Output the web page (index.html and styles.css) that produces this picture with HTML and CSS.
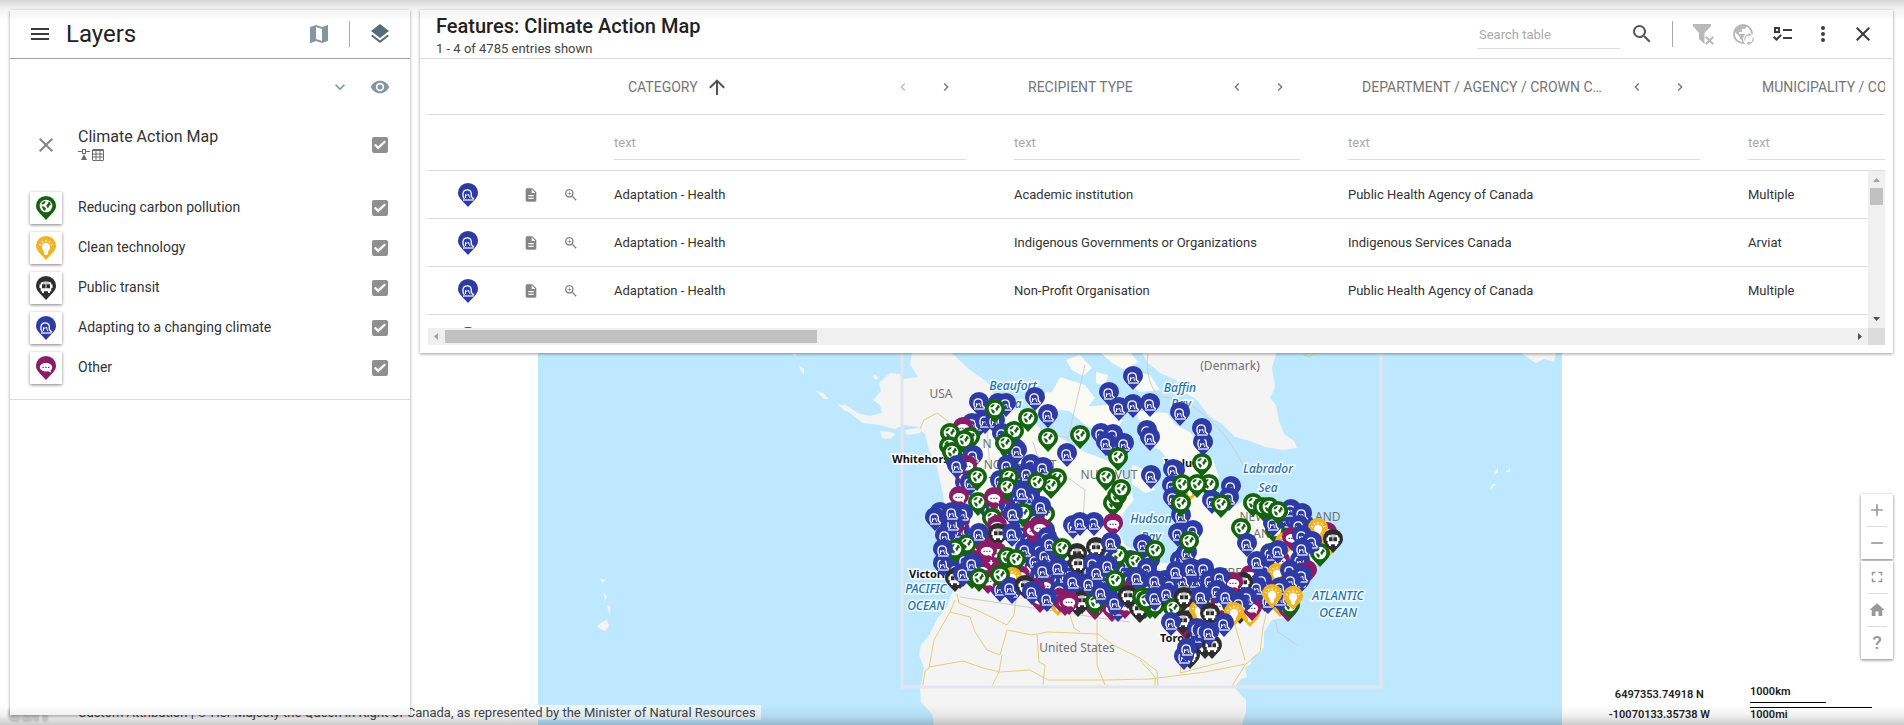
FILE: index.html
```html
<!DOCTYPE html>
<html lang="en">
<head>
<meta charset="utf-8">
<title>Climate Action Map</title>
<link rel="stylesheet" href="styles.css">
</head>
<body>
<svg class="sprite" aria-hidden="true">
  <defs>
    <path id="drop" d="M10 24L3.200 16.800C1.200 14.500 0 12.500 0 9.800A10 9.800 0 0 1 20 9.800C20 12.500 18.800 14.500 16.800 16.800Z"/>
    <symbol id="pin-g" viewBox="0 0 20 24"><use href="#drop" fill="#14640f"/><circle cx="10" cy="10" r="6.300" fill="#fff"/><path fill="#14640f" d="M5.500 7.600L7.300 5.400L9.600 5L9.200 6.800L7.400 8.300L5.700 8.600ZM10.300 9.200L12 7.800L11.800 6.600L13.600 6L15 8.500L13.200 9.600L12.600 11.400L11 11.800ZM5.600 10.300L8 10.600L9.800 12.300L9.200 14.800L7.600 14.200Z"/></symbol>
    <symbol id="pin-y" viewBox="0 0 20 24"><use href="#drop" fill="#f2b322"/><path fill="#fff" d="M10 6.800A4.200 4.200 0 0 1 14.200 11C14.200 13.500 12 14 12 16.500V18L10 19.300L8 18V16.500C8 14 5.800 13.500 5.800 11A4.200 4.200 0 0 1 10 6.800Z"/><path stroke="#fff" stroke-width="1.200" d="M10 3.800V5.800M5.800 5L7 6.600M14.200 5L13 6.600M3.200 8.300L5 9M16.800 8.300L15 9"/></symbol>
    <symbol id="pin-k" viewBox="0 0 20 24"><use href="#drop" fill="#2e2e2e"/><path fill="#fff" d="M5.500 6.300Q10 4.700 14.500 6.300L15.300 7.500V8.500H16.500V12H15.300V15.300H14V17H12V15.300H8V17H6V15.300H4.700V12H3.500V8.500H4.700V7.500Z"/><path fill="#2e2e2e" d="M6 8.300H9.600V12.300H6ZM10.400 8.300H14V12.300H10.400ZM7 6.700H13V7.300H7Z"/></symbol>
    <symbol id="pin-b" viewBox="0 0 20 24"><use href="#drop" fill="#2f3ba4"/><path fill="none" stroke="#fff" stroke-width="1.300" d="M6.400 16L5.600 14.500L5 13.500V10.500A4.200 4.200 0 0 1 13.300 10.500V13.500L15.800 16.200"/><path fill="none" stroke="#fff" stroke-width="1" d="M7.500 15V11.500L9 12.500L10.500 11L11.200 13.500L12 15.200"/><path stroke="#fff" stroke-width="1.200" d="M5 17H15.500"/></symbol>
    <symbol id="pin-m" viewBox="0 0 20 24"><use href="#drop" fill="#8a1c68"/><path fill="#fff" d="M10 6.900C13.500 6.900 16.200 8.800 16.200 11.200C16.200 12.700 15.500 13.700 14.600 14.400L15 16.700L12.200 15.300C8 16 3.800 14.200 3.800 11.200C3.800 8.800 6.500 6.900 10 6.900Z"/><path fill="#8a1c68" d="M6.500 10.700h1.300v1.300h-1.300zM9.300 10.700h1.300v1.300h-1.300zM12.100 10.700h1.300v1.300h-1.300z"/></symbol>
    <symbol id="i-menu" viewBox="0 0 24 24"><path d="M3 6H21V8H3ZM3 11H21V13H3ZM3 16H21V18H3Z"/></symbol>
    <symbol id="i-map" viewBox="0 0 24 24"><path d="M20.500 3L20.340 3.030L15 5.100L9 3L3.360 4.900C3.150 4.970 3 5.150 3 5.380V20.500A.5 .5 0 0 0 3.500 21L3.660 20.970L9 18.900L15 21L20.640 19.100C20.850 19.030 21 18.850 21 18.620V3.500A.5 .5 0 0 0 20.500 3M15 19L9 16.890V5L15 7.110V19Z"/></symbol>
    <symbol id="i-layers" viewBox="0 0 24 24"><path d="M12 16L19.360 10.270L21 9L12 2L3 9L4.630 10.270M12 18.540L4.620 12.810L3 14.070L12 21.070L21 14.070L19.370 12.800Z"/></symbol>
    <symbol id="i-down" viewBox="0 0 24 24"><path d="M7.410 8.580L12 13.170L16.590 8.580L18 10L12 16L6 10Z"/></symbol>
    <symbol id="i-left" viewBox="0 0 24 24"><path d="M15.410 16.580L10.830 12L15.410 7.410L14 6L8 12L14 18Z"/></symbol>
    <symbol id="i-right" viewBox="0 0 24 24"><path d="M8.590 16.580L13.170 12L8.590 7.410L10 6L16 12L10 18Z"/></symbol>
    <symbol id="i-eye" viewBox="0 0 24 24"><path d="M12 9A3 3 0 0 0 9 12A3 3 0 0 0 12 15A3 3 0 0 0 15 12A3 3 0 0 0 12 9M12 17A5 5 0 0 1 7 12A5 5 0 0 1 12 7A5 5 0 0 1 17 12A5 5 0 0 1 12 17M12 4.500C7 4.500 2.730 7.610 1 12C2.730 16.390 7 19.500 12 19.500C17 19.500 21.270 16.390 23 12C21.270 7.610 17 4.500 12 4.500Z"/></symbol>
    <symbol id="i-close" viewBox="0 0 24 24"><path d="M19 6.410L17.590 5L12 10.590L6.410 5L5 6.410L10.590 12L5 17.590L6.410 19L12 13.410L17.590 19L19 17.590L13.410 12Z"/></symbol>
    <symbol id="i-search" viewBox="0 0 24 24"><path d="M9.500 3A6.500 6.500 0 0 1 16 9.500C16 11.110 15.410 12.590 14.440 13.730L14.710 14H15.500L20.500 19L19 20.500L14 15.500V14.710L13.730 14.440C12.590 15.410 11.110 16 9.500 16A6.500 6.500 0 0 1 3 9.500A6.500 6.500 0 0 1 9.500 3M9.500 5C7 5 5 7 5 9.500C5 12 7 14 9.500 14C12 14 14 12 14 9.500C14 7 12 5 9.500 5Z"/></symbol>
    <symbol id="i-zoom" viewBox="0 0 24 24"><path d="M9.500 3A6.500 6.500 0 0 1 16 9.500C16 11.110 15.410 12.590 14.440 13.730L14.710 14H15.500L20.500 19L19 20.500L14 15.500V14.710L13.730 14.440C12.590 15.410 11.110 16 9.500 16A6.500 6.500 0 0 1 3 9.500A6.500 6.500 0 0 1 9.500 3M9.500 5C7 5 5 7 5 9.500C5 12 7 14 9.500 14C12 14 14 12 14 9.500C14 7 12 5 9.500 5ZM9 6.800H10V9H12.200V10H10V12.200H9V10H6.800V9H9Z"/></symbol>
    <symbol id="i-doc" viewBox="0 0 24 24"><path d="M13 9H18.500L13 3.500V9M6 2H14L20 8V20A2 2 0 0 1 18 22H6C4.890 22 4 21.100 4 20V4C4 2.890 4.890 2 6 2M16 18V16H8V18H16M16 14V12H8V14H16Z"/></symbol>
    <symbol id="i-up" viewBox="0 0 24 24"><path d="M13 20H11V8L5.500 13.500L4.080 12.080L12 4.160L19.920 12.080L18.500 13.500L13 8Z"/></symbol>
    <symbol id="i-filter" viewBox="0 0 24 24"><path d="M2 2H20V4L13.500 11V22L8 17V11L2 4ZM15.400 14L18.500 17L21.600 14L23 15.400L20 18.500L23 21.500L21.600 23L18.500 20L15.400 23L14 21.500L17 18.500L14 15.400Z"/></symbol>
    <symbol id="i-globe" viewBox="0 0 24 24"><path d="M17.900 17.390C17.640 16.590 16.890 16 16 16H15V13A1 1 0 0 0 14 12H8V10H10A1 1 0 0 0 11 9V7H13A2 2 0 0 0 15 5V4.590C17.930 5.770 20 8.640 20 12C20 14.080 19.200 15.970 17.900 17.390M11 19.930C7.050 19.440 4 16.080 4 12C4 11.380 4.080 10.780 4.210 10.210L9 15V16A2 2 0 0 0 11 18M12 2A10 10 0 0 0 2 12A10 10 0 0 0 12 22A10 10 0 0 0 22 12A10 10 0 0 0 12 2Z"/><circle cx="18" cy="17" r="6" fill="#fff"/><path fill="none" stroke="currentColor" stroke-width="1.200" d="M14 18.500A4.200 4.200 0 0 1 18 12.800M22 15.500A4.200 4.200 0 0 1 18 21.200"/><path d="M17.500 10.800L20.500 12.800L17.500 14.800ZM18.500 19.200V23.200L15.500 21.200Z"/></symbol>
    <symbol id="i-checklist" viewBox="0 0 24 24"><path d="M3 5H9V11H3ZM5 7V9H7V7ZM12 7H21V9H12ZM12 15H21V17H12ZM2 15.400L3.400 14L5.500 16L9.500 12.200L11 13.600L5.500 19Z"/></symbol>
    <symbol id="i-dots" viewBox="0 0 24 24"><path d="M12 16A2 2 0 0 1 14 18A2 2 0 0 1 10 18A2 2 0 0 1 12 16M12 10A2 2 0 0 1 14 12A2 2 0 0 1 10 12A2 2 0 0 1 12 10M12 4A2 2 0 0 1 14 6A2 2 0 0 1 10 6A2 2 0 0 1 12 4Z"/></symbol>
    <symbol id="i-plus" viewBox="0 0 24 24"><path d="M19 13H13V19H11V13H5V11H11V5H13V11H19Z"/></symbol>
    <symbol id="i-minus" viewBox="0 0 24 24"><path d="M5 11H19V13H5Z"/></symbol>
    <symbol id="i-full" viewBox="0 0 24 24"><path d="M5 5H10V7H7V10H5V5M14 5H19V10H17V7H14V5M17 14H19V19H14V17H17V14M10 17V19H5V14H7V17H10Z"/></symbol>
    <symbol id="i-home" viewBox="0 0 24 24"><path d="M10 20V14H14V20H19V12H22L12 3L2 12H5V20H10Z"/></symbol>
    <symbol id="i-feature" viewBox="0 0 12 12"><path d="M0 2H4V0H8V2H12V3H8V5H4V3H0ZM5 1V4H7V1ZM6 5L9 11H3Z"/></symbol>
    <symbol id="i-grid" viewBox="0 0 12 12"><path fill-rule="evenodd" d="M1 0H11L12 1V11L11 12H1L0 11V1ZM1 2V4.500H3.500V2ZM4.500 2V4.500H7.500V2ZM8.500 2V4.500H11V2ZM1 5.500V7.500H3.500V5.500ZM4.500 5.500V7.500H7.500V5.500ZM8.500 5.500V7.500H11V5.500ZM1 8.500V11H3.500V8.500ZM4.500 8.500V11H7.500V8.500ZM8.500 8.500V11H11V8.500Z"/></symbol>
  </defs>
</svg>

<div class="app">
  <div class="map-layer">
    <svg class="map" viewBox="538 0 1024 725" role="img" aria-label="Map of climate actions in Canada">
      <rect x="538" y="80" width="1024" height="645" fill="#bee8ff"/>
      <g class="land">
        <path d="M937 340L912 352L910 365L918 377L903 379L900 374L890 373L879 383L881 391L873 400L880 405L882 413L870 416L858 413L845 405L838 405L850 413L863 423L880 425L895 429L903 425L918 427L925 434L929 450L936 463L941 485L944 500L940 540L950 565L955 585L947 607L937 619L930 634L921 645L919 655L924 668L920 690L921 702L932 714L934 725H1242L1246 712L1246 700L1240 694L1234 687L1241 679L1247 677L1245 668L1251 664L1252 657L1260 653L1264 647L1264 632L1272 620L1290 617L1300 600L1318 560L1335 545L1330 530L1308 520L1292 503L1270 507L1250 497L1237 505L1222 512L1205 495L1190 488L1186 510L1190 530L1182 545L1186 566L1160 562L1148 558L1125 545L1118 530L1124 512L1134 500L1128 480L1112 462L1085 452L1060 437L1040 428L1020 410L1003 410L994 394L987 382L970 370L957 358Z"/>
        <path d="M1135 340L1147 362L1160 373L1176 380L1184 392L1197 400L1209 416L1222 424L1235 437L1250 441L1265 447L1283 450L1297 448L1294 441L1284 434L1279 421L1276 405L1270 398L1275 387L1272 368L1276 354V340Z"/>
        <path d="M1521 353L1536 363L1544 359L1554 362L1556 353Z"/>
        <path d="M793 354l3 4-1-5zM799 365l5 4 0 6-3-4zM816 391l7 2 6 6-5 0-4-4zM838 404l6 2 8 7-7-2zM880 431l10 1 6 2-6 5-8-1zM905 430l18-3-3 6-13 2zM875 374l3 4-3 2-2-3zM601 579l4 0-1 3-3 0zM604 593l3 4-2 3-1-5zM607 605l3 1 0 9-2-5zM597 626l5-4 5-2 2 6-4 5-5-2z"/>
        <path d="M1492 477l3-2-1-2 4-5 0 4zM1506 472l4-4 0 4zM1490 488l3-4 3 0-5 5z"/>
      </g>
      <g fill="#f9faf4">
        <path d="M1060 377L1085 385L1095 398L1083 413L1060 410L1042 420L1030 405L1038 393L1052 392ZM1085 425L1066 408L1108 405L1123 420L1110 438ZM1100 352L1130 352L1138 362L1125 370L1112 363ZM1066 360L1080 355L1092 368L1083 376L1072 370ZM1130 370L1150 375L1160 390L1140 392L1128 384ZM1096 372L1108 375L1105 386L1096 383ZM1137 410L1150 412L1167 413L1176 425L1190 432L1200 448L1213 460L1219 477L1210 486L1190 478L1174 467L1160 450L1148 444L1158 436L1150 425L1138 420ZM1132 465L1146 470L1155 490L1145 493L1132 484ZM1165 491l8 2 0 6-7-2z"/>
        <path d="M1003 412L1020 412L1040 430L1085 453L1112 463L1128 482L1132 500L1122 514L1117 532L1125 547L1160 563L1186 567L1184 543L1192 530L1188 490L1222 513L1250 498L1308 522L1300 560L1240 590L1190 600L1160 612L1060 600L960 580L945 540L945 500L960 480L975 460Z"/>
      </g>
      <g fill="none" stroke="#cdcdcd">
        <path d="M1085 365L1068 438L1040 432M1033 442L1037 455L1060 472L1085 490L1083 520M985 400L990 470M960 597L1000 603L1060 612L1100 618L1130 622M1148 354C1145 370 1150 392 1162 397L1184 400C1210 418 1225 430 1243 465M1275 620L1278 632L1297 645"/>
      </g>
      <g fill="none" stroke="#e2d07c">
        <path d="M920 429L924 420L937 413L948 421L948 443M957 594L959 603L981 612L1007 625L1014 615L1016 598M955 600L950 612L934 640L929 668L925 671L923 685M950 612L970 617L975 632L987 650L1000 655L1007 630L1032 635L1048 632L1098 634L1113 645L1140 658L1157 671L1158 686M1002 655L999 672L992 686M929 667L963 661L983 668L1000 672L1030 670L1048 680L1105 680L1150 679L1205 672L1246 664L1260 652L1263 628L1267 610M1037 635L1039 662L1045 665L1043 685M1069 612L1074 628L1080 632M1097 618V665L1105 685M1140 660L1155 677V686M1235 625L1245 660M1183 645L1180 673L1230 660M1245 665L1232 686M1303 354l6 3 5-4 6 0"/>
      </g>
      <path d="M902 340V687H1381V340" fill="none" stroke="#e4e6ec" stroke-width="3"/>
      <g class="place" text-anchor="middle">
        <text x="941" y="398">USA</text><text x="1230" y="370">(Denmark)</text><text x="1077" y="652">United States</text>
        <text x="987" y="448">N</text><text x="1020" y="469">NORTHWEST</text><text x="1025" y="486">TERRITORIES</text><text x="1109" y="479">NUNAVUT</text><text x="1290" y="521">NEWFOUNDLAND</text><text x="1266" y="538">AND</text><text x="1226" y="577">QUEBEC</text>
      </g>
      <g class="city"><text x="892" y="463">Whitehorse</text><text x="909" y="578">Victoria</text><text x="1160" y="642">Toronto</text><text x="1164" y="467">Iqaluit</text></g>
      <g class="sea" text-anchor="middle">
        <text x="1013" y="390">Beaufort</text><text x="1012" y="408">Sea</text><text x="1180" y="392">Baffin</text><text x="1181" y="408">Bay</text><text x="1268" y="473">Labrador</text><text x="1268" y="492">Sea</text><text x="1151" y="523">Hudson</text><text x="1151" y="541">Bay</text><text x="926" y="593">PACIFIC</text><text x="926" y="610">OCEAN</text><text x="1338" y="600">ATLANTIC</text><text x="1338" y="617">OCEAN</text>
      </g>
      <g id="pins"></g>
    </svg>
  </div>

  <div class="attribution">
    <span class="esri">esri</span>
    <span>Custom Attribution | © Her Majesty the Queen in Right of Canada, as represented by the Minister of Natural Resources</span>
  </div>

  <div class="map-info">
    <div class="coords"><span>6497353.74918 N</span><span>-10070133.35738 W</span></div>
    <div class="scale"><span class="km">1000km</span><span class="mi">1000mi</span></div>
  </div>

  <nav class="map-nav" aria-label="Map controls">
    <div class="nav-group">
      <button aria-label="Zoom in"><svg><use href="#i-plus"/></svg></button>
      <button aria-label="Zoom out"><svg><use href="#i-minus"/></svg></button>
    </div>
    <div class="nav-group small">
      <button aria-label="Full screen"><svg><use href="#i-full"/></svg></button>
      <button aria-label="Home"><svg><use href="#i-home"/></svg></button>
      <button aria-label="Help"><span class="help">?</span></button>
    </div>
  </nav>

  <div class="panels">
    <aside class="panel layers">
      <header class="layers-head">
        <button class="dark" aria-label="Menu"><svg><use href="#i-menu"/></svg></button>
        <h2>Layers</h2>
        <button class="slate-light" aria-label="Basemap"><svg><use href="#i-map"/></svg></button>
        <span class="rule"></span>
        <button class="slate" aria-label="Add layer"><svg><use href="#i-layers"/></svg></button>
      </header>
      <div class="layers-tools slate-light">
        <button aria-label="Expand groups"><svg><use href="#i-down"/></svg></button>
        <button aria-label="Toggle visibility"><svg><use href="#i-eye"/></svg></button>
      </div>
      <div class="layer-title">
        <button class="grey" aria-label="Remove layer"><svg><use href="#i-close"/></svg></button>
        <div class="title-text">
          <label for="v0">Climate Action Map</label>
          <span class="badges"><svg><use href="#i-feature"/></svg><svg><use href="#i-grid"/></svg></span>
        </div>
        <input type="checkbox" id="v0" checked>
      </div>
      <ul class="legend">
        <li><span class="swatch"><svg><use href="#pin-g"/></svg></span><label for="v1">Reducing carbon pollution</label><input type="checkbox" id="v1" checked></li>
        <li><span class="swatch"><svg><use href="#pin-y"/></svg></span><label for="v2">Clean technology</label><input type="checkbox" id="v2" checked></li>
        <li><span class="swatch"><svg><use href="#pin-k"/></svg></span><label for="v3">Public transit</label><input type="checkbox" id="v3" checked></li>
        <li><span class="swatch"><svg><use href="#pin-b"/></svg></span><label for="v4">Adapting to a changing climate</label><input type="checkbox" id="v4" checked></li>
        <li><span class="swatch"><svg><use href="#pin-m"/></svg></span><label for="v5">Other</label><input type="checkbox" id="v5" checked></li>
      </ul>
    </aside>

    <section class="panel features">
      <header class="features-head">
        <div class="features-title">
          <h2>Features: Climate Action Map</h2>
          <p>1 - 4 of 4785 entries shown</p>
        </div>
        <input class="search" type="text" placeholder="Search table" aria-label="Search table">
        <button class="mid" aria-label="Search"><svg><use href="#i-search"/></svg></button>
        <span class="rule"></span>
        <button class="off" aria-label="Clear filters"><svg><use href="#i-filter"/></svg></button>
        <button class="off" aria-label="Apply filters to map"><svg><use href="#i-globe"/></svg></button>
        <button class="dark" aria-label="Hide columns"><svg><use href="#i-checklist"/></svg></button>
        <button class="dark" aria-label="More"><svg><use href="#i-dots"/></svg></button>
        <button class="dark" aria-label="Close"><svg><use href="#i-close"/></svg></button>
      </header>
      <div class="table-area">
        <div class="table-view">
          <table>
            <colgroup><col class="c-pin"><col class="c-tools"><col class="c-wide"><col class="c-mid"><col class="c-wide"><col class="c-wide"></colgroup>
            <thead>
              <tr>
                <th></th><th></th>
                <th><div class="head"><span>CATEGORY</span><svg class="sort"><use href="#i-up"/></svg><button class="off first" aria-label="Move left"><svg><use href="#i-left"/></svg></button><button aria-label="Move right"><svg><use href="#i-right"/></svg></button></div></th>
                <th><div class="head"><span>RECIPIENT TYPE</span><button class="first" aria-label="Move left"><svg><use href="#i-left"/></svg></button><button aria-label="Move right"><svg><use href="#i-right"/></svg></button></div></th>
                <th><div class="head"><span>DEPARTMENT / AGENCY / CROWN CORPORATION</span><button class="first" aria-label="Move left"><svg><use href="#i-left"/></svg></button><button aria-label="Move right"><svg><use href="#i-right"/></svg></button></div></th>
                <th><div class="head"><span>MUNICIPALITY / COMMUNITY</span><button class="first" aria-label="Move left"><svg><use href="#i-left"/></svg></button><button aria-label="Move right"><svg><use href="#i-right"/></svg></button></div></th>
              </tr>
              <tr class="filters">
                <td></td><td></td>
                <td><input type="text" placeholder="text" aria-label="Filter category"></td>
                <td><input type="text" placeholder="text" aria-label="Filter recipient type"></td>
                <td><input type="text" placeholder="text" aria-label="Filter department"></td>
                <td><input type="text" placeholder="text" aria-label="Filter municipality"></td>
              </tr>
            </thead>
            <tbody>
              <tr><td class="pin-cell"><svg><use href="#pin-b"/></svg></td><td class="tools-cell"><div><button aria-label="Details"><svg><use href="#i-doc"/></svg></button><button aria-label="Zoom to feature"><svg><use href="#i-zoom"/></svg></button></div></td><td>Adaptation - Health</td><td>Academic institution</td><td>Public Health Agency of Canada</td><td>Multiple</td></tr>
              <tr><td class="pin-cell"><svg><use href="#pin-b"/></svg></td><td class="tools-cell"><div><button aria-label="Details"><svg><use href="#i-doc"/></svg></button><button aria-label="Zoom to feature"><svg><use href="#i-zoom"/></svg></button></div></td><td>Adaptation - Health</td><td>Indigenous Governments or Organizations</td><td>Indigenous Services Canada</td><td>Arviat</td></tr>
              <tr><td class="pin-cell"><svg><use href="#pin-b"/></svg></td><td class="tools-cell"><div><button aria-label="Details"><svg><use href="#i-doc"/></svg></button><button aria-label="Zoom to feature"><svg><use href="#i-zoom"/></svg></button></div></td><td>Adaptation - Health</td><td>Non-Profit Organisation</td><td>Public Health Agency of Canada</td><td>Multiple</td></tr>
              <tr><td class="pin-cell"><svg><use href="#pin-b"/></svg></td><td></td><td></td><td></td><td></td><td></td></tr>
            </tbody>
          </table>
        </div>
        <div class="vbar"><span class="arrow up"></span><span class="thumb"></span><span class="arrow down"></span></div>
        <div class="hbar"><span class="arrow left"></span><span class="thumb"></span><span class="arrow right"></span></div>
        <div class="corner"></div>
      </div>
    </section>
  </div>
  <div class="edge-shade"></div>
</div>
<script src="pins.js"></script>
</body>
</html>
```

FILE: styles.css
```css
* { box-sizing: border-box; }
body { margin: 0; font-family: Roboto, "Liberation Sans", sans-serif; font-size: 14px; color: #333; background: #fff; }
button { display: inline-flex; align-items: center; justify-content: center; flex: none; padding: 0; border: 0; background: none; color: inherit; font: inherit; cursor: pointer; }
button svg { width: 24px; height: 24px; }
svg { fill: currentColor; display: block; }
h2, p, ul { margin: 0; padding: 0; }
input { font: inherit; color: inherit; border-radius: 0; }
.sprite { position: absolute; width: 0; height: 0; }
.app { position: relative; height: 100vh; min-height: 600px; overflow: hidden; }
.dark { color: #3c3c3c; }
.mid { color: #555; }
.grey { color: #858585; }
.off { color: #b9b9b9; }
.slate { color: #546e7a; }
.slate-light { color: #8297a1; }
.rule { width: 1px; height: 26px; background: #aaa; }

/* map */
.map-layer { position: absolute; inset: 0; overflow: hidden; }
.map { position: absolute; bottom: 0; left: calc(50% - 414px); width: 1024px; height: 725px; }
.land { fill: #f4f4f4; }
.place { font: 12px "Noto Sans", sans-serif; fill: #707070; }
.city { font: bold 11px "Noto Sans", sans-serif; fill: #111; stroke: #fff; stroke-width: 3px; paint-order: stroke; }
.sea { font: italic 500 12px "Noto Sans", sans-serif; fill: #2672a4; stroke: #f4fbff; stroke-width: 3px; paint-order: stroke; }
.attribution { position: absolute; left: 0; bottom: 5px; display: flex; align-items: center; height: 15px; padding-right: 5px; background: rgba(255, 255, 255, .7); font-size: 13px; color: #444; white-space: nowrap; }
.esri { width: 78px; padding-left: 8px; font-size: 24px; font-weight: bold; line-height: 16px; color: #ddd; text-shadow: 0 0 3px #aaa; }
.map-info { position: absolute; right: 32px; bottom: 0; display: flex; gap: 40px; font-size: 11px; font-weight: 600; color: #222; }
.coords { display: flex; flex-direction: column; align-items: center; line-height: 20px; }
.scale { display: flex; flex-direction: column; width: 122px; gap: 4px; line-height: 14px; }
.km { width: 76px; height: 18px; border-bottom: 1px solid #000; }
.mi { border-top: 1px solid #000; }
.map-nav { position: absolute; right: 11px; bottom: 66px; display: flex; flex-direction: column; gap: 2px; color: #999; }
.nav-group { display: flex; flex-direction: column; width: 32px; background: #fff; box-shadow: 0 1px 3px rgba(0, 0, 0, .5); }
.nav-group button { height: 32px; }
.nav-group button + button { height: 33px; }
.nav-group button + button::before { content: ""; align-self: flex-start; width: 20px; height: 1px; margin-right: -20px; background: #ddd; }
.nav-group svg { width: 20px; height: 20px; }
.nav-group button svg { flex: none; }
.nav-group.small svg { width: 18px; height: 18px; }
.help { width: 20px; font-size: 19px; font-weight: 500; text-align: center; }

/* panels */
.panels { position: relative; display: flex; align-items: flex-start; gap: 10px; height: 100%; padding: 10px 11px 10px 10px; pointer-events: none; }
.panel { background: #fff; box-shadow: 0 1px 3px rgba(0, 0, 0, .4); pointer-events: auto; }
.layers { display: flex; flex-direction: column; flex: none; width: 400px; height: 100%; }
.layers-head { display: flex; align-items: center; height: 49px; padding: 0 12px 0 12px; border-bottom: 1px solid #a3a3a3; }
.layers-head button { width: 36px; height: 36px; }
.layers-head h2 { flex: 1; padding-left: 8px; font-size: 24px; font-weight: 400; line-height: 32px; color: #222; }
.layers-head .rule { margin: 0 12px; }
.layers-tools { display: flex; justify-content: flex-end; height: 56px; padding: 0 10px; }
.layers-tools button { width: 40px; }
.layers-tools svg { width: 20px; height: 20px; }
.layer-title { display: flex; align-items: center; height: 60px; margin-bottom: 13px; padding: 0 22px 0 24px; }
.layer-title button { width: 24px; height: 24px; }
.title-text { display: flex; flex: 1; flex-direction: column; gap: 2px; padding: 0 0 2px 20px; font-size: 16px; line-height: 20px; }
.badges { display: flex; gap: 2px; color: #6d6d6d; }
.badges svg { width: 12px; height: 12px; }
.legend { list-style: none; padding-bottom: 11px; border-bottom: 1px solid #ddd; }
.legend li { display: flex; align-items: center; height: 40px; padding: 0 22px 0 20px; }
.legend label { flex: 1; padding: 0 0 2px 16px; line-height: 20px; }
.swatch { display: grid; place-items: center; width: 32px; height: 32px; background: #fff; box-shadow: 0 1px 3px rgba(0, 0, 0, .5); }
.swatch svg, .pin-cell svg { width: 20px; height: 24px; }
input[type="checkbox"] { appearance: none; display: grid; place-items: center; width: 16px; height: 16px; margin: 0; border-radius: 2px; background: #8f8f8f; }
input[type="checkbox"]:checked::before { content: ""; width: 12px; height: 12px; background: #fff; clip-path: polygon(0 52%, 13% 39%, 35% 61%, 87% 12%, 100% 25%, 35% 88%); }

.features { flex: 1; min-width: 0; }
.features-head { display: flex; align-items: center; height: 49px; padding: 0 10px 0 16px; border-bottom: 1px solid #ddd; }
.features-title { flex: 1; min-width: 0; padding-top: 4px; }
.features-title h2 { font-size: 20px; font-weight: 500; line-height: 24px; color: #222; }
.features-title p { margin-top: 2px; font-size: 13px; line-height: 18px; color: #444; }
.features-head button { width: 40px; height: 40px; }
.features-head .rule { margin: 0 10px; }
.search { width: 143px; height: 30px; padding: 2px 2px 0; margin-right: 2px; border: 0; border-bottom: 1px solid #ddd; background: none; font-size: 13px; }
::placeholder { color: #aaa; opacity: 1; }
.table-area { display: grid; grid-template-columns: minmax(0, 1fr) 17px; grid-template-rows: 112px 157px 17px; padding: 0 8px 8px; }
.table-view { grid-area: 1 / 1 / 3 / 3; overflow: hidden; }
table { width: 1708px; table-layout: fixed; border-collapse: separate; border-spacing: 0; font-size: 13px; }
.c-pin { width: 80px; }
.c-tools { width: 94px; }
.c-mid { width: 334px; }
.c-wide { width: 400px; }
th, td { height: 48px; padding: 0 36px 0 12px; border-bottom: 1px solid #ddd; text-align: left; white-space: nowrap; }
th, .filters td { height: 56px; }
th { padding-left: 26px; font-size: 14px; font-weight: 400; color: #757575; }
.head { display: flex; align-items: center; gap: 3px; }
.head > span { max-width: 244px; overflow: hidden; text-overflow: ellipsis; }
.head button { width: 40px; height: 40px; }
.head .first { margin-left: auto; }
.head button svg { width: 16px; height: 16px; }
.sort { flex: none; width: 24px; height: 24px; margin-left: 4px; color: #555; }
.filters input { width: 100%; height: 34px; padding: 0; border: 0; border-bottom: 1px solid #ddd; background: none; font-size: 13px; display: block; }
.filters td { vertical-align: bottom; padding-bottom: 10px; }
td.pin-cell { padding: 1px 0 0; }
.pin-cell svg { margin: 0 auto; }
td.tools-cell { padding: 1px 8px 0 0; color: #858585; }
.tools-cell div { display: flex; justify-content: center; }
.tools-cell button { width: 40px; height: 32px; }
.tools-cell svg { width: 16px; height: 16px; }
.vbar, .hbar { display: flex; align-items: center; justify-content: space-between; background: #f0f0f0; }
.vbar { grid-area: 2 / 2; flex-direction: column; padding: 7px 0; }
.hbar { grid-area: 3 / 1; padding: 0 6px; }
.vbar .thumb { width: 13px; height: 17px; margin: 6px 0 auto; background: #c1c1c1; }
.hbar .thumb { width: 372px; height: 13px; margin: 0 auto 0 7px; background: #c1c1c1; }
.arrow { width: 7px; height: 4px; background: #505050; }
.up { background: #a3a3a3; clip-path: polygon(50% 0, 100% 100%, 0 100%); }
.down { clip-path: polygon(0 0, 100% 0, 50% 100%); }
.left, .right { width: 4px; height: 7px; }
.left { background: #a3a3a3; clip-path: polygon(100% 0, 100% 100%, 0 50%); }
.right { clip-path: polygon(0 0, 100% 50%, 0 100%); }
.corner { grid-area: 3 / 2; background: #dcdcdc; }
.edge-shade { position: absolute; inset: 0; pointer-events: none; background: linear-gradient(rgba(0, 0, 0, .16), rgba(0, 0, 0, .05) 8px, transparent 22px) top / 100% 22px no-repeat, linear-gradient(transparent, rgba(0, 0, 0, .05) 10px, rgba(0, 0, 0, .2)) bottom / 100% 20px no-repeat; }
```

FILE: pins.js
```js
// Each entry is a category letter followed by the centre of the pin head, drawn back to front.
const pins = `
b950,525 b960,530 b945,535 b950,560 b955,570 b960,575 k955,578 b965,560 m975,560 m985,545 m990,560 m1000,570 b990,510 m982,570 g972,575
m1010,580 k1005,582 b1000,588 b1012,590 m1020,575 b1030,510 b1020,505 b1025,520 b1035,520 m1040,525 b1045,530 b1030,540 b1040,550 m1020,560
b1035,560 b1050,560 b1040,575 m1045,585 m1035,588 m1040,599 y1058,602 b1060,580 b1060,590 m1060,598 b1065,575 b1070,570 b1080,575 k1085,575
b1090,570 m1065,602 k1078,603 m1095,606 m1112,608 k1090,595 b1080,590 b1100,560 b1110,555 b1120,560 b1125,570 b1130,580 b1120,590 b1118,608
m1125,605 b1130,560 g1118,555 b1105,580 b1140,585 b1150,590 g1135,600 g1145,605 k1140,609 g1150,605 b1160,600 m1130,590 b1150,560 b1165,580
g1155,605 k1170,600 k1180,590 b1170,585 b1180,575 b1195,580 b1210,585 m1190,610 m1185,625 k1190,620 b1200,600 k1205,605 g1210,600 m1220,605
b1215,580 b1230,590 b1240,590 g1240,600 m1245,600 k1240,610 g1232,605 b1175,470 b1180,560 b1185,555 b1195,570 b1205,575 k1195,640 m1192,648
k1190,655 k1205,645 b1200,635 y1280,603 m1288,608 g1290,605 m1265,598 b1268,600 b1280,598 m1270,565 m1280,560 b1265,570 b1275,580 b1285,585
b1300,580 m1307,570 b1285,520 b1295,520 b1305,525 b1310,535 m1305,540 m1300,530 b1300,560 g1275,530 b1255,580 b1250,585 m1250,575 y1250,613
b979,423 b972,423 b985,420 b995,420 b965,432 b955,460 b1002,433 b1015,448 b1010,450 b1010,470 b1018,475 b1020,482 b1035,472 b1045,475 b1000,480
b1110,440 b1115,450 b965,482 m965,475 b1010,500 b1018,500 b1005,505 m1000,505 b995,505 b1030,495 g1045,514 m960,520 b940,512 b957,515
b979,402 b998,403 b1006,403 g995,409 b1035,397 g1028,418 b1048,414 m963,427 g950,433 g970,437 g964,440 g949,446 b973,455 g952,452 g1014,431
b1017,450 g1005,443 g1048,438 g1080,435 b1067,453 b1133,376 b1109,392 b1119,407 b1133,404 b1150,403 b1101,433 b1113,434 b1106,442 b1124,443
b1147,430 b1150,437 g1118,457 g1106,477 b1151,475 g1113,503 g1117,496 g1121,489 m1113,523 b1094,522 b1073,525 b1080,522
m967,465 b957,465 b970,482 g977,477 b1007,465 b1031,464 b1043,467 b1027,473 g1009,477 g1007,487 g1057,478 g1051,485 g1037,482 b1030,497 b1022,492
m959,496 g978,502 m994,497 b1041,506 g1023,513 b1013,513 b935,517 b963,513 b953,523 b952,512 g967,544 g955,549 b979,533 b943,563 b943,549
g992,518 m997,525 k998,533 m997,552 m987,550 b1012,533 m1033,530 m1040,527 b1025,549 b1045,555 b1047,537 b1050,543 g1062,548 k1077,553 k1078,563 k1096,547 b1111,542
m988,580 g1007,557 g1016,559 b963,573 b972,563 y1012,577 g1000,575 g979,578 b1010,587 k1025,585 b1032,591 b1047,598 b1043,570 b1058,567 b1073,581
k1082,600 m1069,601 b1093,563 b1089,583 b1097,572 b1108,565 g1115,580 g1095,602 b1101,592 b1115,602 k1128,595 b1143,544 g1155,550 g1135,561
b1147,568 b1137,577 k1139,608 g1142,597 g1146,600 b1155,580 b1155,597
b1180,412 b1203,442 b1202,428 b1173,469 g1202,463 y1190,487 b1172,485 b1173,497 g1209,484 g1182,484 g1197,484 b1181,515 g1181,503
b1231,486 b1229,497 b1212,500 g1221,504 b1178,533 b1193,530 b1187,552 g1189,541 g1253,503 g1263,507 b1273,523 g1269,507 b1291,509 g1278,511
b1302,513 b1299,525 g1241,528 b1247,543 y1285,542 m1292,537 b1270,553 b1278,550 m1327,532 y1318,528 y1330,542 g1320,553 b1302,535 b1312,541 b1302,548 k1333,539
b1257,561 y1277,573 m1305,572 b1290,570 b1302,575 b1262,580 b1257,587 k1243,582 m1233,582 b1291,580 b1280,587 y1272,594 y1293,596
b1183,580 b1176,571 b1191,568 b1204,568 b1210,580 b1220,577 b1167,593 g1173,608 k1184,597 y1199,610 b1201,596 b1217,590
m1252,607 b1247,597 b1239,603 b1226,596 y1234,612 k1183,620 b1171,622 k1210,613 b1197,628 b1203,630 b1224,623 k1212,645 b1209,632 b1184,656 b1187,648`;

const SVG = 'http://www.w3.org/2000/svg';
const layer = document.getElementById('pins');
for (const entry of pins.trim().split(/\s+/)) {
  const [x, y] = entry.slice(1).split(',').map(Number);
  const pin = document.createElementNS(SVG, 'use');
  pin.setAttribute('href', '#pin-' + entry[0]);
  pin.setAttribute('x', x - 10);
  pin.setAttribute('y', y - 10);
  pin.setAttribute('width', 20);
  pin.setAttribute('height', 24);
  layer.append(pin);
}
```
